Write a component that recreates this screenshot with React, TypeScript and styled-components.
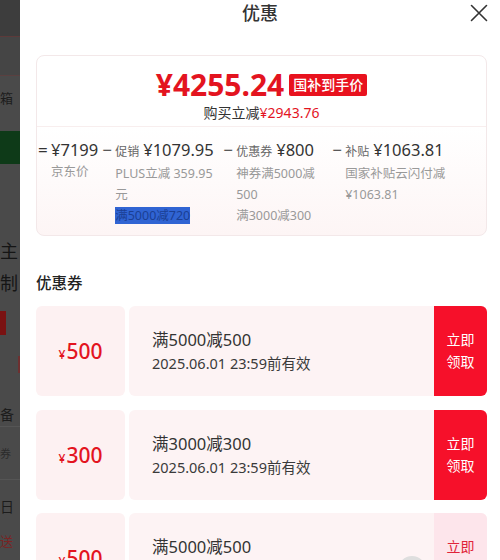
import styled, { createGlobalStyle } from 'styled-components';

const GlobalStyle = createGlobalStyle`
  html, body { margin: 0; padding: 0; }
  body {
    font-family: "Noto Sans", "Noto Sans CJK SC", sans-serif;
    background: #4a4a4a;
  }
`;

const Page = styled.div`
  position: relative;
  display: flex;
  width: 500px;
  height: 560px;
  overflow: hidden;
`;

/* dimmed page behind the drawer */
const Backdrop = styled.div`
  width: 20px;
  flex-shrink: 0;
  display: flex;
  flex-direction: column;
  background: #4a4a4a;
  overflow: hidden;
`;

const BgRow = styled.div<{ $h: number; $bg?: string; $line?: string; $size?: number; $color?: string; $end?: boolean }>`
  height: ${p => p.$h}px;
  flex-shrink: 0;
  display: flex;
  align-items: center;
  justify-content: ${p => (p.$end ? 'flex-end' : 'flex-start')};
  background: ${p => p.$bg || 'transparent'};
  border-bottom: ${p => (p.$line ? `1px solid ${p.$line}` : 'none')};
  font-size: ${p => p.$size || 13}px;
  color: ${p => p.$color || '#1c1c1c'};
  white-space: nowrap;
  overflow: hidden;
`;

const BgChip = styled.div<{ $w: number; $h: number; $bg: string }>`
  width: ${p => p.$w}px;
  height: ${p => p.$h}px;
  flex-shrink: 0;
  background: ${p => p.$bg};
`;

const Drawer = styled.div`
  flex: 1;
  display: flex;
  flex-direction: column;
  background: #fff;
`;

const Header = styled.div`
  height: 26px;
  display: grid;
  grid-template-columns: 1fr auto 1fr;
  align-items: center;
`;

const Title = styled.div`
  grid-column: 2;
  font-size: 18px;
  font-weight: 500;
  color: #333;
  line-height: 26px;
`;

const Close = styled.div`
  justify-self: end;
  margin-right: 12px;
  display: flex;
`;

const Section = styled.div`
  padding: 0 13px 0 16px;
`;

const PriceCard = styled.div`
  margin-top: 29px;
  border: 1px solid #f3e8e9;
  border-radius: 8px;
  overflow: hidden;
  background: linear-gradient(180deg, #ffffff 0%, #ffffff 40%, #fdf5f5 100%);
`;

const PriceTop = styled.div`
  padding: 11px 0 3px;
  display: flex;
  flex-direction: column;
  align-items: center;
`;

const PriceRow = styled.div`
  display: flex;
  align-items: center;
  gap: 5px;
  height: 36px;
`;

const BigPrice = styled.div`
  font-size: 30px;
  font-weight: 700;
  color: #e3141f;
  line-height: 36px;
`;

const Badge = styled.div`
  height: 22px;
  padding: 0 4px;
  border-radius: 2px;
  background: #e8121e;
  color: #fff;
  font-size: 14px;
  font-weight: 500;
  line-height: 22px;
`;

const SaveLine = styled.div`
  font-size: 14px;
  line-height: 20px;
  color: #333;
`;

const Red = styled.span`
  color: #e3141f;
`;

const Breakdown = styled.div`
  border-top: 1px solid #f8eeee;
  padding: 12px 0 9px 1px;
  display: flex;
  gap: 4px;
`;

const Item = styled.div`
  display: flex;
  gap: 3px;
`;

const Op = styled.div`
  width: 10px;
  font-size: 17px;
  line-height: 22px;
  color: #333;
`;

const Block = styled.div<{ $w?: number }>`
  width: ${p => (p.$w ? `${p.$w}px` : 'auto')};
  display: flex;
  flex-direction: column;
`;

const BlockHead = styled.div`
  display: flex;
  align-items: baseline;
  gap: 4px;
  white-space: nowrap;
  line-height: 22px;
`;

const Label = styled.span`
  font-size: 12px;
  color: #666;
`;

const Amount = styled.span`
  font-size: 16.5px;
  color: #333;
`;

const Note = styled.div`
  font-size: 12.5px;
  line-height: 21px;
  color: #999;
`;

const Selected = styled.span`
  background: #3064d3;
  color: #1b3f93;
`;

const Divider = styled.div`
  margin-top: 21px;
  height: 7px;
  background: #f5f6f9;
`;

const SectionTitle = styled.div`
  padding-top: 15px;
  font-size: 15.5px;
  font-weight: 500;
  line-height: 22px;
  color: #222;
`;

const CouponList = styled.div`
  margin-top: 12px;
  display: flex;
  flex-direction: column;
  gap: 13.5px;
`;

const Coupon = styled.div`
  height: 90px;
  display: flex;
  gap: 4px;
`;

const Face = styled.div`
  width: 89px;
  border-radius: 6px;
  background: #fdf1f2;
  display: flex;
  align-items: baseline;
  justify-content: center;
  padding-top: 32px;
  box-sizing: border-box;
  color: #e3141f;
`;

const Yen = styled.span`
  font-size: 12px;
  font-weight: 500;
  margin-right: 1px;
`;

const FaceValue = styled.span`
  font-size: 21px;
  font-weight: 500;
  line-height: 26px;
`;

const Body = styled.div`
  flex: 1;
  display: flex;
  border-radius: 6px;
  overflow: hidden;
  background: #fdf3f4;
`;

const Info = styled.div`
  flex: 1;
  padding-left: 23px;
  display: flex;
  flex-direction: column;
  justify-content: center;
  color: #333;
`;

const Rule = styled.div`
  font-size: 16.5px;
  line-height: 24px;
`;

const Expire = styled.div`
  font-size: 14.5px;
  line-height: 22px;
  color: #3a3a3a;
`;

const Grab = styled.div<{ $muted?: boolean }>`
  width: 53px;
  display: flex;
  align-items: center;
  justify-content: center;
  text-align: center;
  font-size: 14px;
  line-height: 22px;
  background: ${p => (p.$muted ? '#fde5eb' : '#f6102a')};
  color: ${p => (p.$muted ? '#e0243a' : '#fff')};
`;

const FloatDot = styled.div`
  position: absolute;
  left: 398px;
  top: 556px;
  width: 28px;
  height: 28px;
  border-radius: 50%;
  background: #dedede;
`;

const bgRows = [
  { h: 36, bg: '#3d3d3d', line: '#5d3a3a' },
  { h: 38, bg: '#454545', line: '#5a4040' },
  { h: 43, text: '箱', size: 13 },
  { h: 12 },
  { h: 33, bg: '#0e3a18' },
  { h: 69 },
  { h: 34, text: '主', size: 18, color: '#151515' },
  { h: 30, text: '制', size: 18, color: '#151515' },
  { h: 14 },
  { h: 24, chip: { w: 6, bg: '#7a1212' } },
  { h: 21 },
  { h: 17, chip: { w: 2, bg: '#6e3030' }, end: true },
  { h: 28 },
  { h: 25, text: '备', size: 14, line: '#555' },
  { h: 52, text: '券', size: 11, color: '#2a2a2a', line: '#555' },
  { h: 52, text: '日', size: 14 },
  { h: 16, text: '送', size: 13, color: '#7a2424' },
];

const coupons = [
  { value: 500, rule: '满5000减500', muted: false },
  { value: 300, rule: '满3000减300', muted: false },
  { value: 500, rule: '满5000减500', muted: true },
];

export default function App() {
  return (
    <>
      <GlobalStyle />
      <Page>
        <Backdrop>
          {bgRows.map((r, i) => (
            <BgRow key={i} $h={r.h} $bg={r.bg} $line={r.line} $size={r.size} $color={r.color} $end={r.end}>
              {r.text}
              {r.chip && <BgChip $w={r.chip.w} $h={r.h} $bg={r.chip.bg} />}
            </BgRow>
          ))}
        </Backdrop>
        <Drawer>
          <Header>
            <Title>优惠</Title>
            <Close>
              <svg width="18" height="18" viewBox="0 0 18 18">
                <path d="M1.5 1.5 L16.5 16.5 M16.5 1.5 L1.5 16.5" stroke="#333" strokeWidth="1.6" strokeLinecap="round" />
              </svg>
            </Close>
          </Header>
          <Section>
            <PriceCard>
              <PriceTop>
                <PriceRow>
                  <BigPrice>¥4255.24</BigPrice>
                  <Badge>国补到手价</Badge>
                </PriceRow>
                <SaveLine>
                  购买立减<Red>¥2943.76</Red>
                </SaveLine>
              </PriceTop>
              <Breakdown>
                <Item>
                  <Op>=</Op>
                  <Block>
                    <BlockHead>
                      <Amount>¥7199</Amount>
                    </BlockHead>
                    <Note>京东价</Note>
                  </Block>
                </Item>
                <Item>
                  <Op>−</Op>
                  <Block $w={104}>
                    <BlockHead>
                      <Label>促销</Label>
                      <Amount>¥1079.95</Amount>
                    </BlockHead>
                    <Note>PLUS立减 359.95元</Note>
                    <Note>
                      <Selected>满5000减720</Selected>
                    </Note>
                  </Block>
                </Item>
                <Item>
                  <Op>−</Op>
                  <Block $w={92}>
                    <BlockHead>
                      <Label>优惠券</Label>
                      <Amount>¥800</Amount>
                    </BlockHead>
                    <Note>神券满5000减500</Note>
                    <Note>满3000减300</Note>
                  </Block>
                </Item>
                <Item>
                  <Op>−</Op>
                  <Block $w={106}>
                    <BlockHead>
                      <Label>补贴</Label>
                      <Amount>¥1063.81</Amount>
                    </BlockHead>
                    <Note>国家补贴云闪付减¥1063.81</Note>
                  </Block>
                </Item>
              </Breakdown>
            </PriceCard>
          </Section>
          <Divider />
          <Section>
            <SectionTitle>优惠券</SectionTitle>
            <CouponList>
              {coupons.map((c, i) => (
                <Coupon key={i}>
                  <Face>
                    <Yen>¥</Yen>
                    <FaceValue>{c.value}</FaceValue>
                  </Face>
                  <Body>
                    <Info>
                      <Rule>{c.rule}</Rule>
                      <Expire>2025.06.01 23:59前有效</Expire>
                    </Info>
                    <Grab $muted={c.muted}>
                      立即
                      <br />
                      领取
                    </Grab>
                  </Body>
                </Coupon>
              ))}
            </CouponList>
          </Section>
        </Drawer>
        <FloatDot />
      </Page>
    </>
  );
}
